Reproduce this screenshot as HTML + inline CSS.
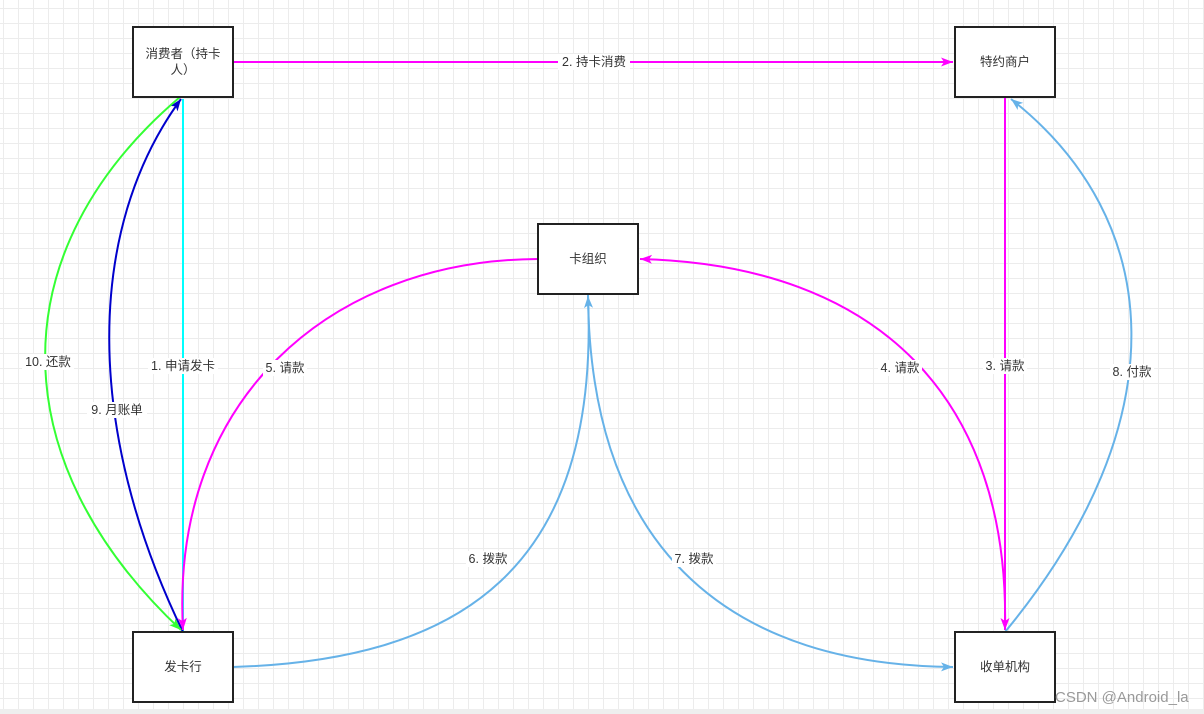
<!DOCTYPE html>
<html><head><meta charset="utf-8"><style>
html,body{margin:0;padding:0;}
body{width:1204px;height:714px;overflow:hidden;background:#fff;
background-image:linear-gradient(#ececec 1px,transparent 1px),linear-gradient(90deg,#ececec 1px,transparent 1px);
background-size:15px 15px;background-position:3px 8px;position:relative;
font-family:"Liberation Sans","Noto Sans CJK SC",sans-serif;}
.strip{position:absolute;left:0;top:709px;width:1204px;height:5px;background:#eee;}
</style></head><body>
<div class="strip"></div>
<svg width="1204" height="714" style="position:absolute;left:0;top:0" font-family="Liberation Sans, Noto Sans CJK SC, sans-serif" font-size="12.5">
<defs>
<marker id="mm" markerWidth="13" markerHeight="12" refX="12" refY="6" orient="auto" markerUnits="userSpaceOnUse"><path d="M0,1.5 L12,6 L0,10.5 L3,6 Z" fill="#f0f"/></marker>
<marker id="mb" markerWidth="13" markerHeight="12" refX="12" refY="6" orient="auto" markerUnits="userSpaceOnUse"><path d="M0,1.5 L12,6 L0,10.5 L3,6 Z" fill="#0000cc"/></marker>
<marker id="mg" markerWidth="13" markerHeight="12" refX="12" refY="6" orient="auto" markerUnits="userSpaceOnUse"><path d="M0,1.5 L12,6 L0,10.5 L3,6 Z" fill="#33ff33"/></marker>
<marker id="ml" markerWidth="13" markerHeight="12" refX="12" refY="6" orient="auto" markerUnits="userSpaceOnUse"><path d="M0,1.5 L12,6 L0,10.5 L3,6 Z" fill="#66b2e8"/></marker>
</defs>
<g fill="none" stroke-width="2">
<path d="M233,62 L953,62" stroke="#f0f" marker-end="url(#mm)"/>
<path d="M183,632 L183,99" stroke="#00ffff"/>
<path d="M183,632 C85,430 85,230 181,99" stroke="#0000cc" marker-end="url(#mb)"/>
<path d="M180,97 C0,250 0,460 181,630" stroke="#33ff33" marker-end="url(#mg)"/>
<path d="M538,259 C330,260 170,400 183,630" stroke="#f0f" marker-end="url(#mm)"/>
<path d="M1005,97 L1005,630" stroke="#f0f" marker-end="url(#mm)"/>
<path d="M1005,630 C1010,400 880,265 640,259" stroke="#f0f" marker-end="url(#mm)"/>
<path d="M1005,632 C1180,420 1165,220 1011,99" stroke="#66b2e8" marker-end="url(#ml)"/>
<path d="M233,667 C460,660 600,570 588,296" stroke="#66b2e8" marker-end="url(#ml)"/>
<path d="M588,294 C590,560 740,665 953,667" stroke="#66b2e8" marker-end="url(#ml)"/>
</g>
<g fill="#fff" stroke="#222" stroke-width="2">
<rect x="133" y="27" width="100" height="70"/>
<rect x="955" y="27" width="100" height="70"/>
<rect x="538" y="224" width="100" height="70"/>
<rect x="133" y="632" width="100" height="70"/>
<rect x="955" y="632" width="100" height="70"/>
</g>
<g fill="#333" text-anchor="middle">
<text x="183" y="58">消费者（持卡</text><text x="183" y="74">人）</text>
<text x="1005" y="66">特约商户</text>
<text x="588" y="263">卡组织</text>
<text x="183" y="671">发卡行</text>
<text x="1005" y="671">收单机构</text>
</g>
<g fill="#333" text-anchor="middle">
<rect x="558" y="54" width="72" height="16" fill="#fff"/><text x="594" y="66">2. 持卡消费</text>
<rect x="148" y="358" width="70" height="16" fill="#fff"/><text x="183" y="370">1. 申请发卡</text>
<rect x="87" y="402" width="60" height="16" fill="#fff"/><text x="117" y="414">9. 月账单</text>
<rect x="22" y="354" width="52" height="16" fill="#fff"/><text x="48" y="366">10. 还款</text>
<rect x="263" y="360" width="44" height="16" fill="#fff"/><text x="285" y="372">5. 请款</text>
<rect x="878" y="360" width="44" height="16" fill="#fff"/><text x="900" y="372">4. 请款</text>
<rect x="983" y="358" width="44" height="16" fill="#fff"/><text x="1005" y="370">3. 请款</text>
<rect x="1110" y="364" width="44" height="16" fill="#fff"/><text x="1132" y="376">8. 付款</text>
<rect x="466" y="551" width="44" height="16" fill="#fff"/><text x="488" y="563">6. 拨款</text>
<rect x="672" y="551" width="44" height="16" fill="#fff"/><text x="694" y="563">7. 拨款</text>
</g>
<text x="1055" y="702" font-size="15" fill="#999">CSDN @Android_la</text>
</svg>
</body></html>
